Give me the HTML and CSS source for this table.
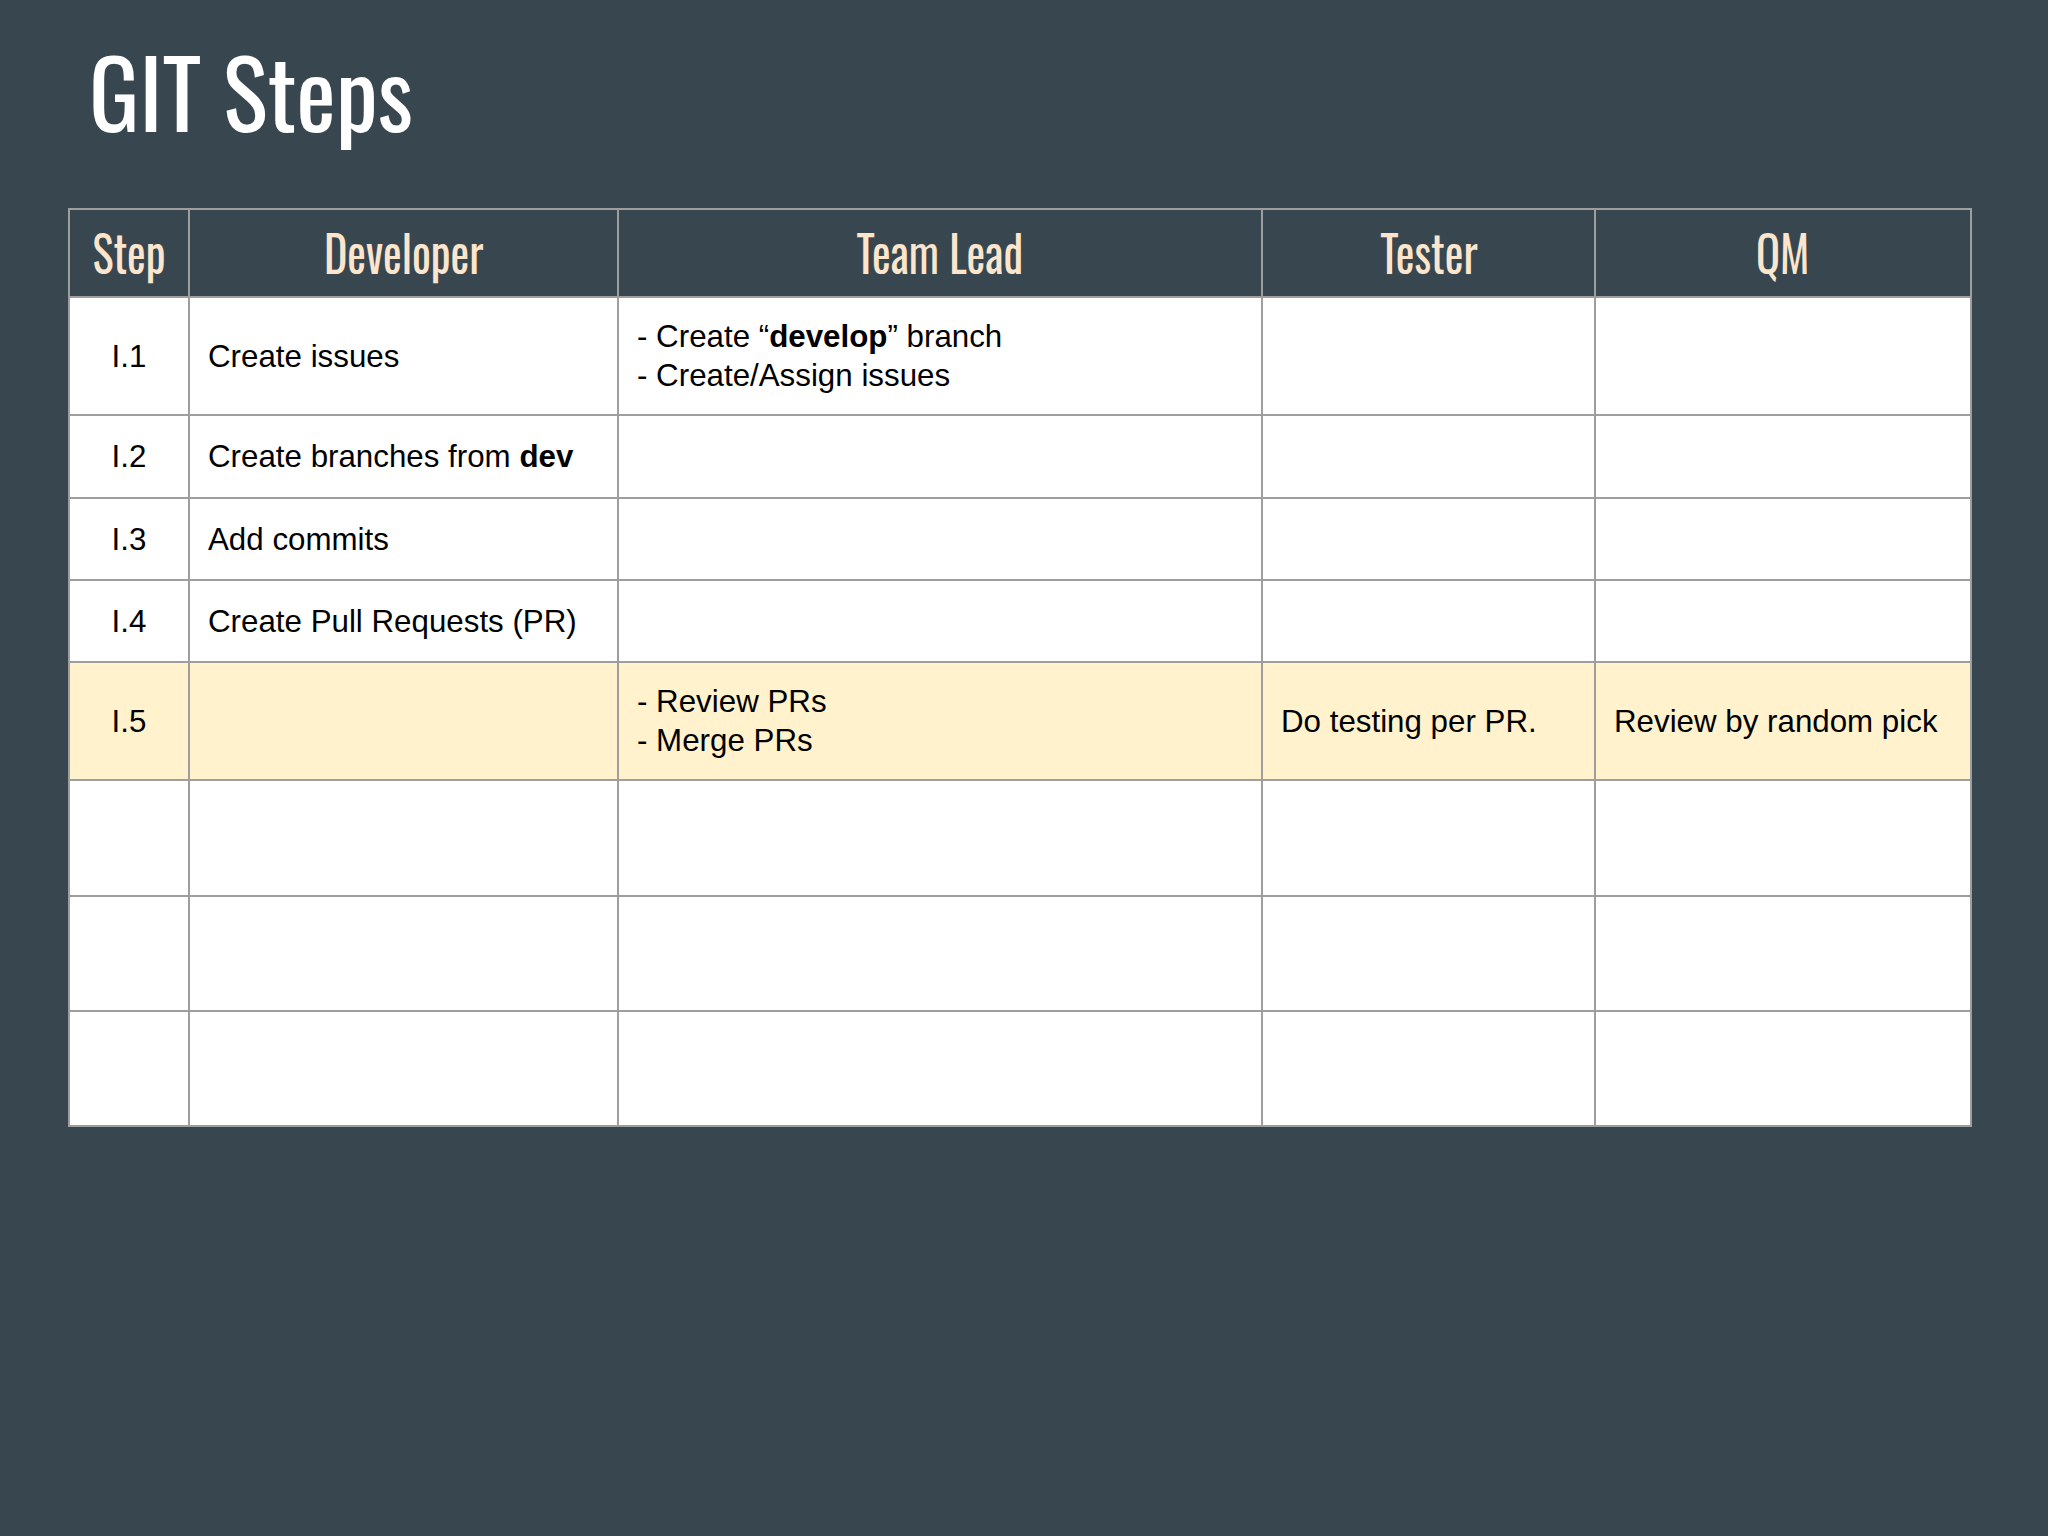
FILE: index.html
```html
<!DOCTYPE html>
<html lang="en">
<head>
<meta charset="utf-8">
<title>GIT Steps</title>
<link rel="stylesheet" href="styles.css">
</head>
<body>
<div class="slide">
  <h1 class="title">GIT Steps</h1>
  <table class="steps">
    <thead>
      <tr class="r-head">
        <th class="c-step"><span class="squeeze">Step</span></th>
        <th class="c-dev"><span class="squeeze">Developer</span></th>
        <th class="c-lead"><span class="squeeze">Team Lead</span></th>
        <th class="c-test"><span class="squeeze">Tester</span></th>
        <th class="c-qm"><span class="squeeze">QM</span></th>
      </tr>
    </thead>
    <tbody>
      <tr class="r-118">
        <td class="num">I.1</td>
        <td>Create issues</td>
        <td>- Create “<b>develop</b>” branch<br>- Create/Assign issues</td>
        <td></td>
        <td></td>
      </tr>
      <tr class="r-83">
        <td class="num">I.2</td>
        <td>Create branches from <b>dev</b></td>
        <td></td>
        <td></td>
        <td></td>
      </tr>
      <tr class="r-82">
        <td class="num">I.3</td>
        <td>Add commits</td>
        <td></td>
        <td></td>
        <td></td>
      </tr>
      <tr class="r-82">
        <td class="num">I.4</td>
        <td>Create Pull Requests (PR)</td>
        <td></td>
        <td></td>
        <td></td>
      </tr>
      <tr class="r-118 hl">
        <td class="num">I.5</td>
        <td></td>
        <td>- Review PRs<br>- Merge PRs</td>
        <td>Do testing per PR.</td>
        <td>Review by random pick</td>
      </tr>
      <tr class="r-116">
        <td class="num"></td><td></td><td></td><td></td><td></td>
      </tr>
      <tr class="r-115">
        <td class="num"></td><td></td><td></td><td></td><td></td>
      </tr>
      <tr class="r-115">
        <td class="num"></td><td></td><td></td><td></td><td></td>
      </tr>
    </tbody>
  </table>
</div>
</body>
</html>
```

FILE: styles.css
```css
* {
  box-sizing: border-box;
}

html, body {
  margin: 0;
  padding: 0;
  background: #38474f;
}

body {
  width: 2048px;
  height: 1536px;
  overflow: hidden;
  font-family: "Liberation Sans", Arial, sans-serif;
}

.slide {
  padding: 38px 0 0 68px;
}

.title {
  margin: 0 0 66px 21px;
  font-family: "Oswald", "Liberation Sans Narrow", "DejaVu Sans Condensed", sans-serif;
  font-weight: 400;
  font-size: 94px;
  line-height: 104px;
  height: 104px;
  color: #ffffff;
  white-space: nowrap;
}

.steps {
  table-layout: fixed;
  width: 1904px;
  border-collapse: separate;
  border-spacing: 0;
  border-top: 2px solid #9e9e9e;
  border-left: 2px solid #9e9e9e;
}

.steps th,
.steps td {
  border-right: 2px solid #9e9e9e;
  border-bottom: 2px solid #9e9e9e;
  vertical-align: middle;
  padding: 0 8px 0 18px;
  overflow: hidden;
}

.steps th {
  background: #38474f;
  color: #fce5cd;
  font-family: "Oswald", "Liberation Sans Narrow", "DejaVu Sans Condensed", sans-serif;
  font-weight: 400;
  font-size: 51px;
  line-height: 60px;
  text-align: center;
  padding: 0 0 4px 0;
  white-space: nowrap;
}

.steps th .squeeze {
  display: inline-block;
  transform: scaleX(0.87);
  transform-origin: center center;
}

.c-step { width: 120px; }
.c-dev  { width: 429px; }
.c-lead { width: 644px; }
.c-test { width: 333px; }
.c-qm   { width: 376px; }

.r-head { height: 88px; }
.r-118  { height: 118px; }
.r-116  { height: 116px; }
.r-115  { height: 115px; }
.r-83   { height: 83px; }
.r-82   { height: 82px; }

.steps td {
  background: #ffffff;
  color: #000000;
  font-size: 31.3px;
  line-height: 39px;
  white-space: nowrap;
}

.steps td.num {
  text-align: center;
  padding: 0;
}

.steps tr.hl td {
  background: #fff2cc;
}

.steps b {
  font-weight: 700;
}
```
